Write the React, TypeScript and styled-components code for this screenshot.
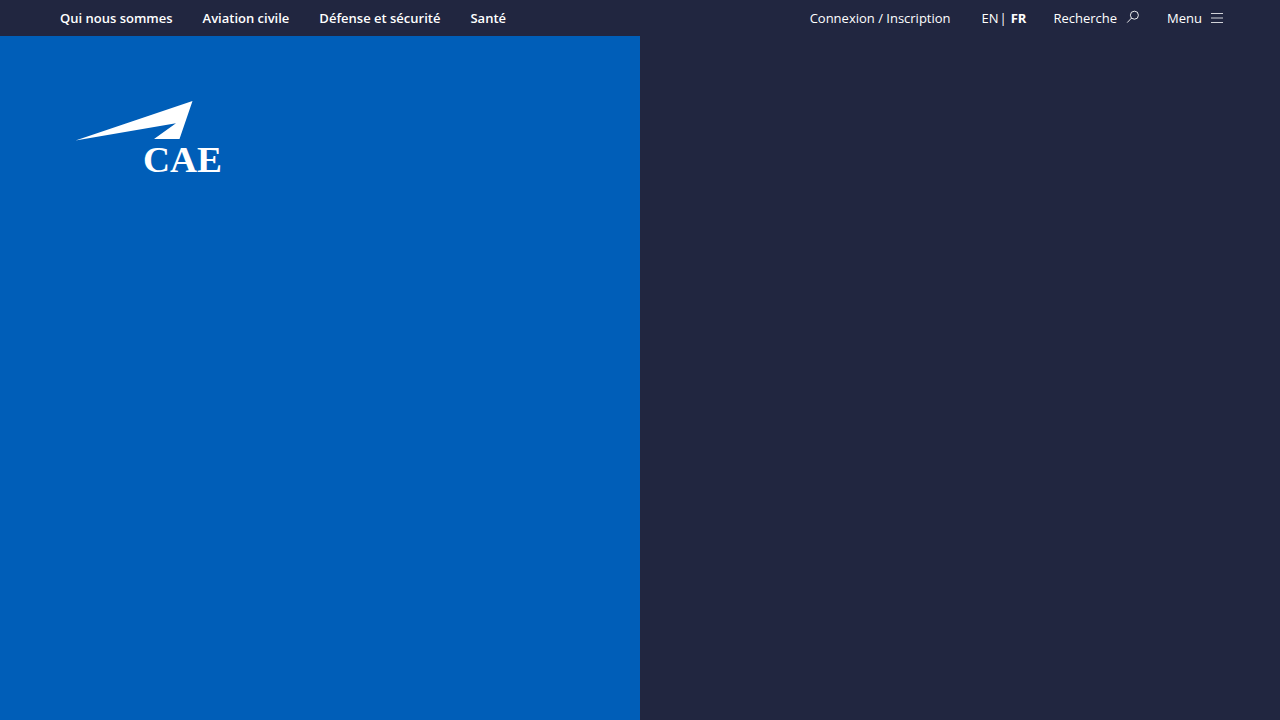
import React from "react";
import styled, { createGlobalStyle } from "styled-components";

const Global = createGlobalStyle`
  html, body { margin: 0; padding: 0; height: 100%; background: #212640; overflow: hidden; }
  * { box-sizing: border-box; }
`;

const Page = styled.div`
  width: 1280px;
  height: 720px;
  display: flex;
  flex-direction: column;
  background: #212640;
  font-family: "Open Sans", "Noto Sans", sans-serif;
  color: #fff;
`;

const TopBar = styled.header`
  height: 36px;
  flex: none;
  display: flex;
  align-items: center;
  justify-content: space-between;
  padding: 0 57px 0 60px;
  font-size: 13px;
`;

const MainNav = styled.nav`
  display: flex;
  gap: 30px;
`;

const MainLink = styled.a`
  font-weight: 600;
  color: #fff;
  white-space: nowrap;
`;

const Tools = styled.div`
  display: flex;
  align-items: center;
`;

const Tool = styled.a<{ $gap: number }>`
  display: flex;
  align-items: center;
  gap: 9px;
  margin-right: ${(p) => p.$gap}px;
  color: #fff;
  white-space: nowrap;
  &:last-child { margin-right: 0; }
`;

const LangSwitch = styled.span`
  word-spacing: -2.4px;
`;

const Strong = styled.b`
  font-weight: 700;
  color: #fff;
  margin-left: 4px;
`;

const SearchIcon = styled.svg`
  display: block;
  margin-bottom: 2px;
`;

const Split = styled.main`
  flex: 1;
  display: grid;
  grid-template-columns: 640px 640px;
`;

const BluePanel = styled.section`
  background: #005eb8;
  padding: 65px 0 0 75px;
`;

const Logo = styled.svg`
  display: block;
  width: 148px;
  height: 78px;
  overflow: visible;
`;

const LogoText = styled.text`
  font-family: "Liberation Serif", serif;
  font-weight: 700;
  font-size: 35px;
  fill: #fff;
`;

const DarkPanel = styled.section`
  background: #212640;
`;

export default function App() {
  return (
    <Page>
      <Global />
      <TopBar>
        <MainNav>
          <MainLink>Qui nous sommes</MainLink>
          <MainLink>Aviation civile</MainLink>
          <MainLink>Défense et sécurité</MainLink>
          <MainLink>Santé</MainLink>
        </MainNav>
        <Tools>
          <Tool $gap={31}>Connexion / Inscription</Tool>
          <Tool $gap={27}>
            <LangSwitch>EN |<Strong>FR</Strong></LangSwitch>
          </Tool>
          <Tool $gap={27}>
            Recherche
            <SearchIcon width="14" height="14" viewBox="0 0 14 14" fill="none" stroke="#fff" strokeWidth="0.9">
              <circle cx="8.4" cy="5.2" r="4" />
              <path d="M5.6 8 L1.2 12.6" />
            </SearchIcon>
          </Tool>
          <Tool $gap={0}>
            Menu
            <svg width="12" height="10" viewBox="0 0 12 10" stroke="#fff" strokeWidth="0.8">
              <path d="M0 0.5H12M0 5H12M0 9.5H12" />
            </svg>
          </Tool>
        </Tools>
      </TopBar>
      <Split>
        <BluePanel>
          <Logo viewBox="0 0 148 78">
            <polygon fill="#fff" points="117.5,0 0.5,39.5 101,22.3 79,38 104.5,38" />
            <LogoText x="68" y="71" textLength="79" lengthAdjust="spacingAndGlyphs">CAE</LogoText>
          </Logo>
        </BluePanel>
        <DarkPanel />
      </Split>
    </Page>
  );
}
